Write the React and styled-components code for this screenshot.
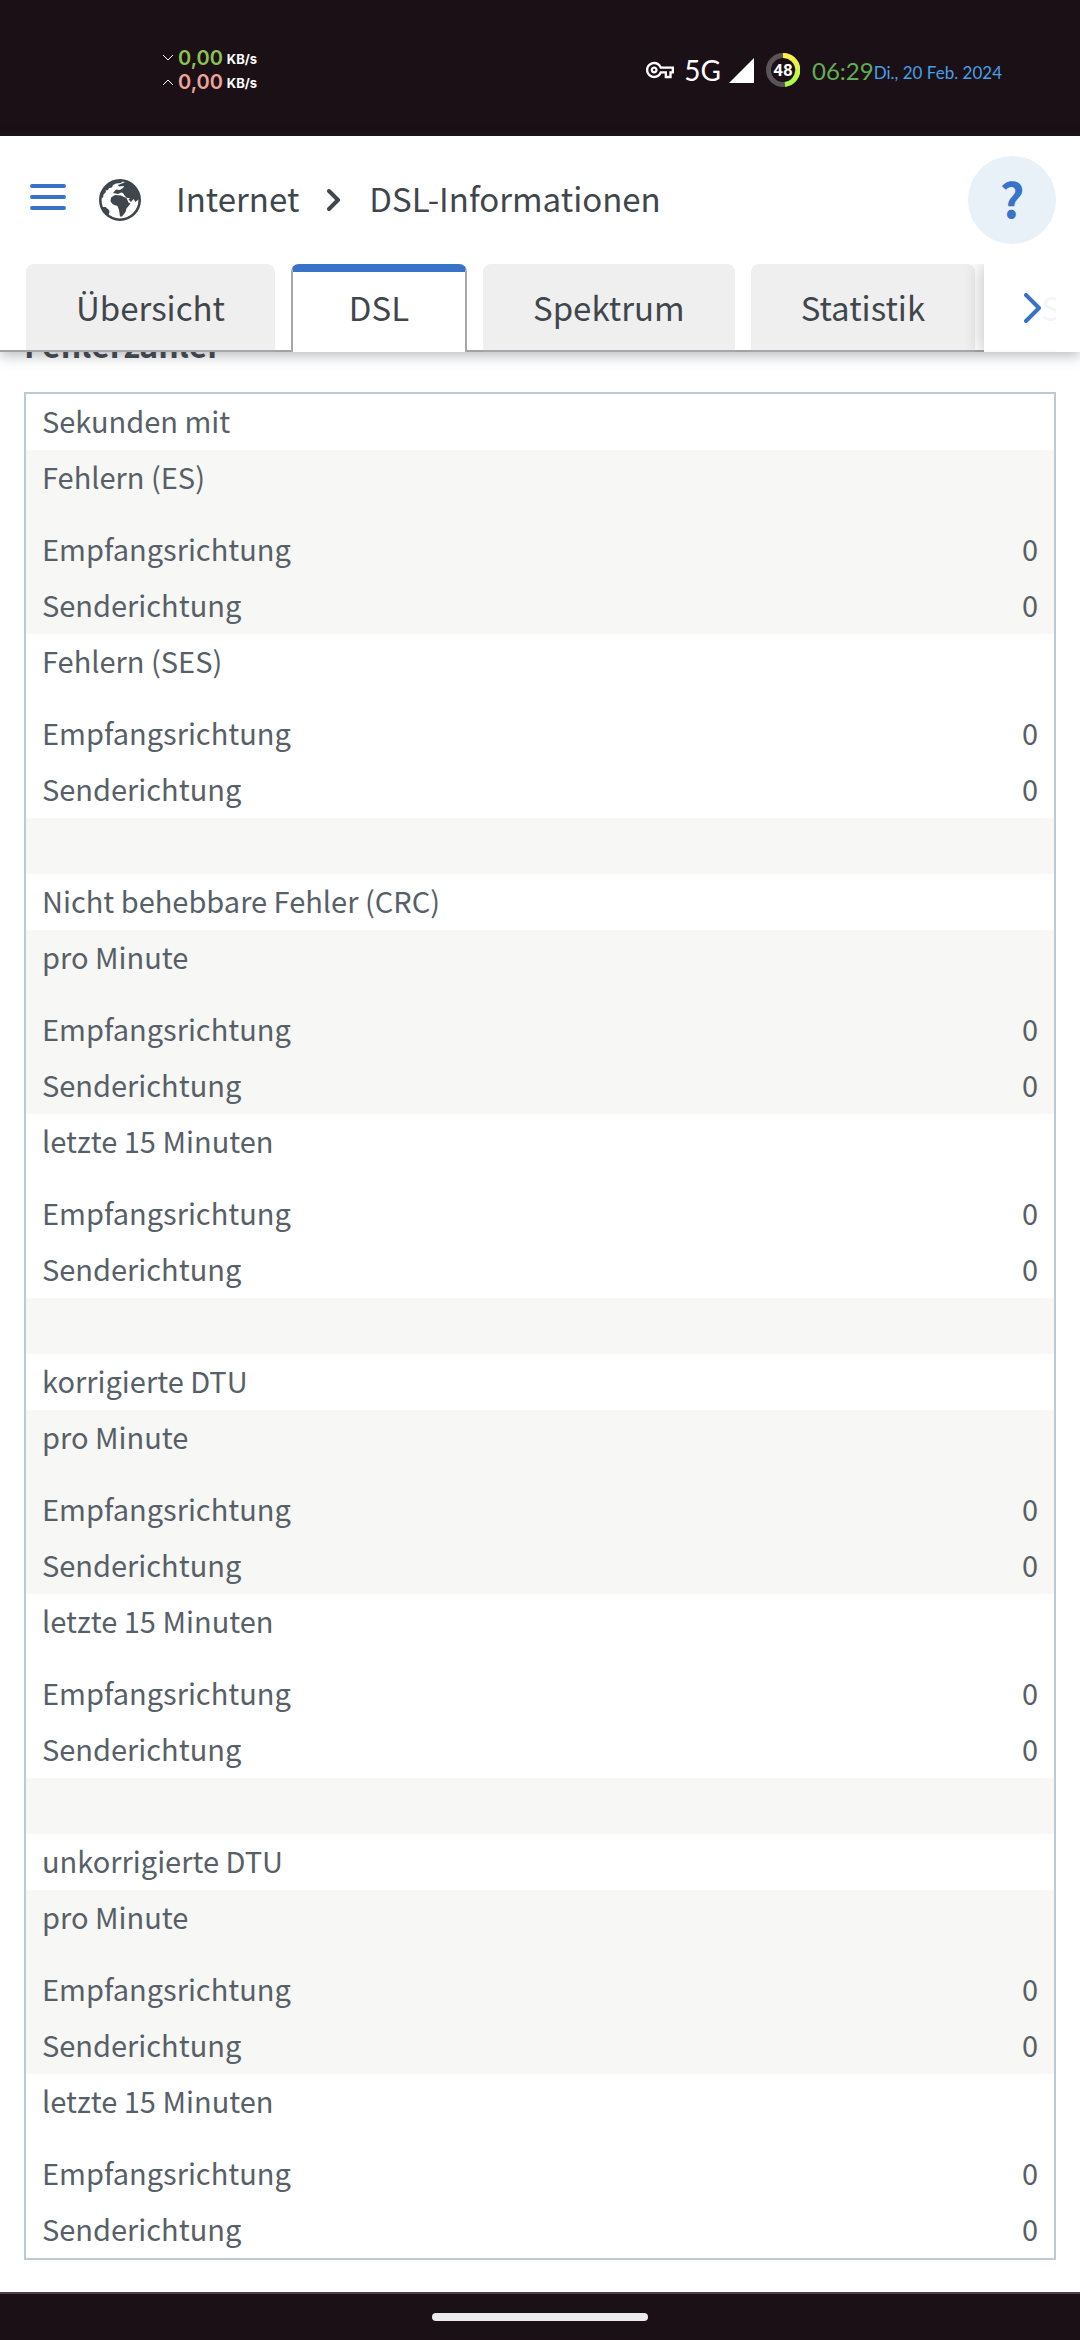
import React, { useState } from "react";
import styled, { createGlobalStyle } from "styled-components";
import { MdOutlineVpnKey } from "react-icons/md";

const GlobalStyle = createGlobalStyle`
  * {
    box-sizing: border-box;
  }

  body {
    margin: 0;
    background: #fff;
    font-family: "Noto Sans CJK SC", "Open Sans", sans-serif;
  }

  button {
    font-family: inherit;
    cursor: pointer;
  }
`;

const directions = [
  { label: "Empfangsrichtung", value: 0 },
  { label: "Senderichtung", value: 0 },
];

const counters = [
  { title: "Sekunden mit", parts: ["Fehlern (ES)", "Fehlern (SES)"] },
  { title: "Nicht behebbare Fehler (CRC)", parts: ["pro Minute", "letzte 15 Minuten"] },
  { title: "korrigierte DTU", parts: ["pro Minute", "letzte 15 Minuten"] },
  { title: "unkorrigierte DTU", parts: ["pro Minute", "letzte 15 Minuten"] },
];

const tabs = ["Übersicht", "DSL", "Spektrum", "Statistik", "Störsicherheit"];

const GlobeIcon = () => (
  <svg width="42" height="42" viewBox="0 0 42 42" aria-hidden="true">
    <circle cx="21" cy="21" r="19.7" fill="none" stroke="#3f464c" strokeWidth="2.6" />
    <g fill="#3f464c">
      {/* Europe and Asia */}
      <path d="M14 14L17 10.5L21 11L24.5 8.5L25 7L20 7.5L19 6L24 4L28 2L34 5L40 14L40.500 19.500L36.500 23L34.500 20L32 23L29.500 20.500L31 19L28 19L25.500 16.500L24 14L22 13.500L19 15Z" />
      {/* Africa */}
      <path d="M12 18.500L16 16L22 16.500L25 18L27.500 19L29.500 23.500L31.500 24.500L27.500 29.500L26.500 33L23 37.500L21 37.500L20 31L18.500 27L14 25.500L11.500 22.500Z" />
      {/* Greenland and the Americas */}
      <path d="M2 18L4 11L10 4.500L17 1.500L24 2L22 4L17 4.500L14 6L13 8.500L10 9L9 11L6.500 11.500L7 13L4.500 15.500L4 19Z" />
      <path d="M1.500 26L3 28L6.500 28L10 31L10.500 33L9 37L4.500 33Z" />
    </g>
  </svg>
);

const App = () => {
  const [activeTab, setActiveTab] = useState("DSL");

  return (
    <>
      <GlobalStyle />
      <Page>
        <StatusBar>
          <Speeds>
            <Speed $color="#8fc055">
              <svg width="12" height="8" viewBox="0 0 12 8">
                <path d="M1 1L6 6L11 1" fill="none" stroke="#fff" />
              </svg>
              0,00 <small>KB/s</small>
            </Speed>
            <Speed $color="#eda49c">
              <svg width="12" height="8" viewBox="0 0 12 8">
                <path d="M1 7L6 2L11 7" fill="none" stroke="#fff" />
              </svg>
              0,00 <small>KB/s</small>
            </Speed>
          </Speeds>
          <StatusIcons>
            <MdOutlineVpnKey size={28} />
            <Network>5G</Network>
            <svg width="25" height="25" viewBox="0 0 25 25">
              <path d="M25 0V25H0Z" fill="#fff" />
            </svg>
            <Battery>
              <svg width="34" height="34" viewBox="0 0 34 34">
                <defs>
                  <linearGradient id="charge" x1="0" y1="0" x2="0" y2="1">
                    <stop offset="0" stopColor="#fff04d" />
                    <stop offset="1" stopColor="#a4fb4b" />
                  </linearGradient>
                </defs>
                <circle cx="17" cy="17" r="14.5" fill="none" stroke="#5a5357" strokeWidth="5" />
                <path d="M17 2.5A14.5 14.5 0 0 1 19 31.400" fill="none" stroke="url(#charge)" strokeWidth="5" />
              </svg>
              <span>48</span>
            </Battery>
            <Clock>06:29</Clock>
            <Today>Di., 20 Feb. 2024</Today>
          </StatusIcons>
        </StatusBar>

        <Header>
          <TitleBar>
            <MenuButton type="button" aria-label="Menü">
              <svg width="36" height="28" viewBox="0 0 36 28">
                <path d="M2 3H34M2 14H34M2 25H34" stroke="#3873c8" strokeWidth="4" strokeLinecap="round" />
              </svg>
            </MenuButton>
            <GlobeIcon />
            <Crumbs>
              <a href="#internet">Internet</a>
              <svg width="14" height="24" viewBox="0 0 14 24">
                <path
                  d="M2 3L11 12L2 21"
                  fill="none"
                  stroke="#3f464c"
                  strokeWidth="4"
                  strokeLinecap="round"
                  strokeLinejoin="round"
                />
              </svg>
              <span>DSL-Informationen</span>
            </Crumbs>
            <HelpButton type="button" aria-label="Hilfe">?</HelpButton>
          </TitleBar>
          <TabBar>
            <Tabs>
              {tabs.map((tab) => (
                <Tab
                  key={tab}
                  type="button"
                  $active={tab === activeTab}
                  onClick={() => setActiveTab(tab)}
                >
                  {tab}
                </Tab>
              ))}
            </Tabs>
            <NextTabs type="button" aria-label="Weitere Tabs">
              <svg width="18" height="30" viewBox="0 0 18 30">
                <path
                  d="M2 2L15 15L2 28"
                  fill="none"
                  stroke="#3873c8"
                  strokeWidth="4"
                  strokeLinecap="round"
                  strokeLinejoin="round"
                />
              </svg>
            </NextTabs>
          </TabBar>
        </Header>

        <Content>
          <SectionTitle>Fehlerzähler</SectionTitle>
          <CounterTable>
            {counters.map((counter, index) => (
              <React.Fragment key={counter.title}>
                {index > 0 && (
                  <tbody>
                    <Row $shaded>
                      <td colSpan={2} />
                    </Row>
                  </tbody>
                )}
                <tbody>
                  <Row>
                    <th colSpan={2}>{counter.title}</th>
                  </Row>
                </tbody>
                {counter.parts.map((part, i) => (
                  <tbody key={part}>
                    <Row $shaded={i === 0} $tall>
                      <th colSpan={2}>{part}</th>
                    </Row>
                    {directions.map((direction) => (
                      <Row key={direction.label} $shaded={i === 0}>
                        <th>{direction.label}</th>
                        <td>{direction.value}</td>
                      </Row>
                    ))}
                  </tbody>
                ))}
              </React.Fragment>
            ))}
          </CounterTable>
        </Content>

        <NavBar>
          <Handle />
        </NavBar>
      </Page>
    </>
  );
};

const Page = styled.div`
  display: flex;
  flex-direction: column;
  min-height: 100vh;
`;

const StatusBar = styled.div`
  display: flex;
  align-items: center;
  justify-content: space-between;
  height: 136px;
  padding: 4px 78px 0 162px;
  background: #1a1015;
  color: #fff;
  font-family: Lato, sans-serif;
`;

const Speeds = styled.div`
  display: flex;
  flex-direction: column;
`;

const Speed = styled.div`
  display: flex;
  align-items: center;
  gap: 4px;
  color: ${(props) => props.$color};
  font-family: Inter, sans-serif;
  font-size: 20px;
  font-weight: 600;
  line-height: 22px;

  small {
    padding-top: 2px;
    color: #fff;
    font-size: 13px;
    font-weight: 700;
  }
`;

const StatusIcons = styled.div`
  display: flex;
  align-items: center;
`;

const Network = styled.span`
  margin: 0 8px 0 10px;
  font-size: 28px;
`;

const Battery = styled.div`
  display: grid;
  place-items: center;
  margin: 0 12px;

  svg,
  span {
    grid-area: 1 / 1;
  }

  span {
    font-family: Roboto, sans-serif;
    font-size: 17px;
    font-weight: 700;
  }
`;

const Clock = styled.span`
  color: #62ae57;
  font-size: 24px;
`;

const Today = styled.span`
  padding-top: 4px;
  color: #48a0e8;
  font-size: 17px;
`;

const Header = styled.header`
  position: relative;
  z-index: 1;
  background: #fff;
  box-shadow: 0 4px 12px rgba(63, 70, 76, 0.35);
`;

const TitleBar = styled.div`
  display: flex;
  align-items: center;
  height: 128px;
  padding: 0 24px 0 30px;
`;

const MenuButton = styled.button`
  display: flex;
  margin-right: 33px;
  padding: 0 0 6px;
  border: 0;
  background: none;
`;

const Crumbs = styled.nav`
  display: flex;
  flex: 1;
  align-items: center;
  gap: 28px;
  margin-left: 35px;
  color: #3f464c;
  font-size: 33px;
  line-height: 48px;

  a,
  span {
    padding-bottom: 4px;
    color: inherit;
    text-decoration: none;
  }
`;

const HelpButton = styled.button`
  width: 88px;
  height: 88px;
  padding: 0 0 6px;
  border: 0;
  border-radius: 50%;
  background: #e8f0f8;
  color: #3873c8;
  font-size: 48px;
  font-weight: 700;
  line-height: 82px;
`;

const TabBar = styled.div`
  position: relative;
  display: flex;
  height: 88px;
  padding: 0 24px 0 0;
`;

const Tabs = styled.div`
  display: flex;
  flex: 1;
  gap: 16px;
  min-width: 0;
  padding-left: 26px;
  overflow: hidden;
  background: linear-gradient(#9fa3a6, #9fa3a6) bottom / 100% 2px no-repeat;
`;

const Tab = styled.button`
  flex: none;
  min-width: 176px;
  padding: ${(props) => (props.$active ? "0 48px 10px" : "0 50px")};
  border: solid #a5a8ab;
  border-width: ${(props) => (props.$active ? "0 2px" : "0 0 2px")};
  border-top: ${(props) => (props.$active ? "8px solid #3873c8" : "0")};
  border-radius: 8px 8px 0 0;
  background: ${(props) => (props.$active ? "#fff" : "#efefef")};
  color: #3f464c;
  font-size: 33px;
  line-height: 48px;
`;

const NextTabs = styled.button`
  position: absolute;
  top: 0;
  right: 0;
  bottom: 0;
  display: flex;
  align-items: center;
  width: 96px;
  padding: 0 0 0 40px;
  border: 0;
  background: rgba(255, 255, 255, 0.95);
  box-shadow: -4px 0 16px rgba(0, 0, 0, 0.2);
  clip-path: inset(0 0 0 -24px);
`;

const Content = styled.main`
  flex: 1;
  padding: 0 24px 32px;
`;

const SectionTitle = styled.h2`
  margin: -32px 0 24px;
  color: #3f464c;
  font-size: 32px;
  font-weight: 700;
  line-height: 48px;
`;

const CounterTable = styled.table`
  width: 100%;
  border: 2px solid #bccad3;
  border-spacing: 0;
  color: #575f68;
  font-size: 29px;
  line-height: 40px;
`;

const Row = styled.tr`
  height: ${(props) => (props.$tall ? 72 : 56)}px;
  background: ${(props) => (props.$shaded ? "#f7f7f5" : "#fff")};

  th,
  td {
    padding: 6px 16px 10px;
    font-weight: 400;
    text-align: left;
    vertical-align: top;
  }

  td {
    text-align: right;
  }
`;

const NavBar = styled.div`
  display: flex;
  align-items: center;
  justify-content: center;
  height: 48px;
  border-top: 2px solid #533f49;
  background: #1a1015;
`;

const Handle = styled.div`
  width: 216px;
  height: 8px;
  border-radius: 4px;
  background: #ebebeb;
`;

export default App;
